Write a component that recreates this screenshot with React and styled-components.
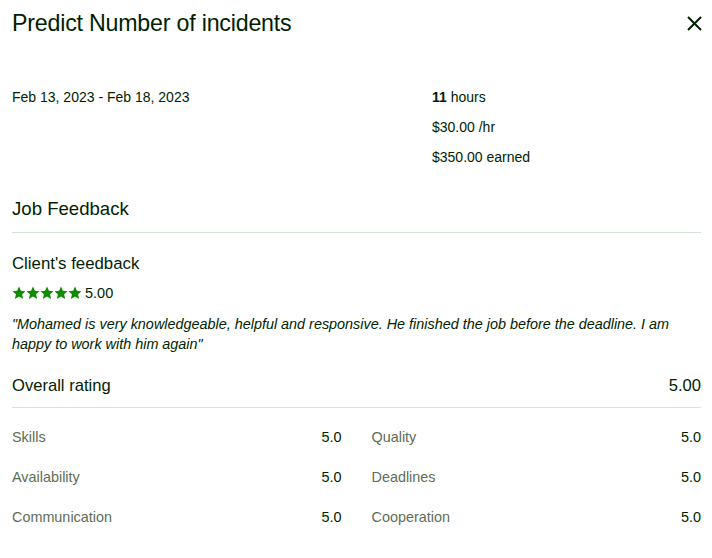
import React from "react";
import styled, { createGlobalStyle } from "styled-components";

const Global = createGlobalStyle`
  html, body { margin: 0; padding: 0; background: #fff; }
  body { font-family: "Liberation Sans", Arial, sans-serif; color: #001e00; }
`;

const Page = styled.div`
  width: 712px;
  box-sizing: border-box;
  padding: 0 11px 0 12px;
`;

const Header = styled.div`
  display: flex;
  align-items: center;
  justify-content: space-between;
  height: 46px;
`;

const Title = styled.h1`
  margin: 0;
  font-size: 23.2px;
  font-weight: 400;
  color: #001e00;
  letter-spacing: -0.2px;
`;

const Close = styled.button`
  border: 0;
  background: none;
  padding: 0;
  margin-right: -1px;
  width: 15px;
  height: 15px;
  display: flex;
  color: #001e00;
`;

const Summary = styled.div`
  display: grid;
  grid-template-columns: 420px 1fr;
  padding-top: 41px;
`;

const Text = styled.div`
  font-size: 14px;
  line-height: 20px;
  color: #001e00;
`;

const Stats = styled.div`
  display: flex;
  flex-direction: column;
  gap: 10px;
`;

const Strong = styled.span`
  font-weight: ${(p) => (p.$bold ? 600 : 400)};
  color: #001e00;
`;

const SectionTitle = styled.h2`
  margin: 0;
  padding-top: 30px;
  padding-bottom: 11px;
  font-size: 18.6px;
  line-height: 24px;
  font-weight: 400;
  border-bottom: 1px solid ${(p) => p.$line};
`;

const Sub = styled.h3`
  margin: 0;
  padding-top: 20px;
  font-size: 16.8px;
  line-height: 22px;
  font-weight: 400;
`;

const RatingLine = styled.div`
  display: flex;
  align-items: center;
  gap: 3px;
  margin-top: 8px;
  font-size: 14.5px;
  line-height: 20px;
`;

const Stars = styled.div`
  display: flex;
  gap: 0px;
  color: #108a00;
`;

const Quote = styled.p`
  margin: 11px 0 0;
  font-size: 14.4px;
  line-height: 20px;
  font-style: italic;
  color: #001e00;
`;

const Overall = styled.div`
  display: flex;
  justify-content: space-between;
  align-items: center;
  margin-top: 21px;
  padding-bottom: 10px;
  font-size: 16.6px;
  line-height: 22px;
  border-bottom: 1px solid #e0e0e0;
`;

const Grid = styled.div`
  display: grid;
  grid-template-columns: 1fr 1fr;
  column-gap: 30px;
  row-gap: 20px;
  padding-top: 19px;
`;

const Cell = styled.div`
  display: flex;
  justify-content: space-between;
  font-size: 14.4px;
  line-height: 20px;
`;

const Label = styled.span`
  color: #5e6d55;
`;

const Value = styled.span`
  color: #001e00;
`;

const Star = () => (
  <svg width="14" height="14" viewBox="0 0 24 24" fill="currentColor">
    <path d="M12 1l3.3 7.2 7.9.8-5.9 5.3 1.7 7.8L12 18.1 5 22.1l1.7-7.8L.8 9l7.9-.8z" />
  </svg>
);

const rows = [
  ["Skills", "5.0"],
  ["Quality", "5.0"],
  ["Availability", "5.0"],
  ["Deadlines", "5.0"],
  ["Communication", "5.0"],
  ["Cooperation", "5.0"],
];

export default function App() {
  return (
    <Page>
      <Global />
      <Header>
        <Title>Predict Number of incidents</Title>
        <Close aria-label="Close">
          <svg width="15" height="15" viewBox="0 0 15 15" stroke="currentColor" strokeWidth="2" strokeLinecap="butt">
            <path d="M1 1l13 13M14 1L1 14" />
          </svg>
        </Close>
      </Header>
      <Summary>
        <Text>Feb 13, 2023 - Feb 18, 2023</Text>
        <Stats>
          <Text><Strong $bold>11</Strong> hours</Text>
          <Text><Strong>$30.00</Strong> /hr</Text>
          <Text><Strong>$350.00</Strong> earned</Text>
        </Stats>
      </Summary>
      <SectionTitle $line="#d5e0d5">Job Feedback</SectionTitle>
      <Sub>Client's feedback</Sub>
      <RatingLine>
        <Stars>
          <Star /><Star /><Star /><Star /><Star />
        </Stars>
        5.00
      </RatingLine>
      <Quote>
        "Mohamed is very knowledgeable, helpful and responsive. He finished the job before the deadline. I am happy to work with him again"
      </Quote>
      <Overall>
        <span>Overall rating</span>
        <span>5.00</span>
      </Overall>
      <Grid>
        {rows.map(([l, v]) => (
          <Cell key={l}>
            <Label>{l}</Label>
            <Value>{v}</Value>
          </Cell>
        ))}
      </Grid>
    </Page>
  );
}
